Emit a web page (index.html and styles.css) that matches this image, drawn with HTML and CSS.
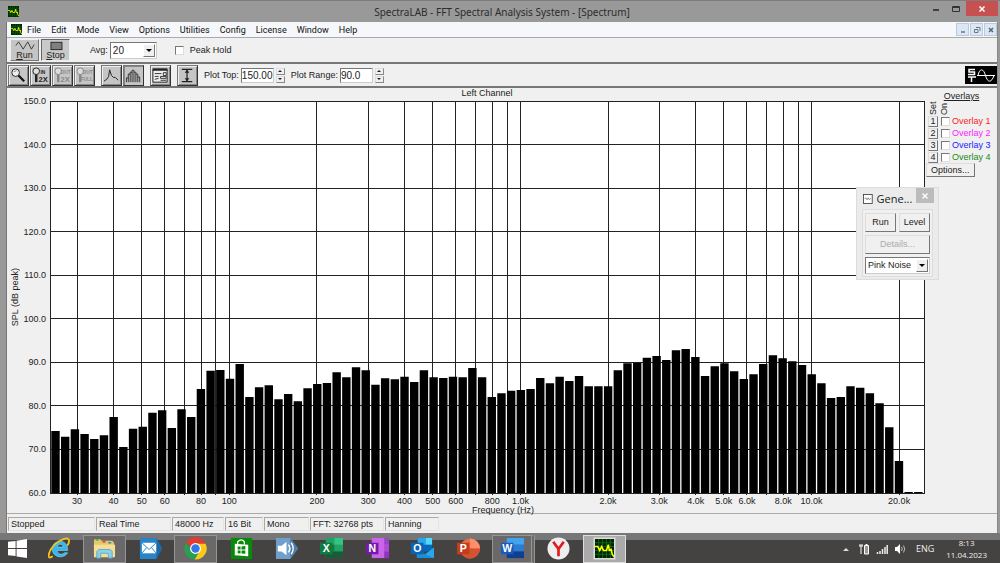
FILE: index.html
```html
<!DOCTYPE html>
<html lang="en">
<head>
<meta charset="utf-8">
<title>SpectraLAB</title>
<link rel="stylesheet" href="styles.css">
</head>
<body>
<svg class="defs" aria-hidden="true">
  <symbol id="app" viewBox="0 0 20 20"><rect width="20" height="20" fill="#020"/><path d="M4 0V20M8 0V20M12 0V20M16 0V20M0 4H20M0 8H20M0 12H20M0 16H20" stroke="#0a6a16" stroke-width="1"/><path d="M0 8H3L5 12L7 8L9 12H12L14 6L15 12L17 11L18 16L20 19" fill="none" stroke="#ff0" stroke-width="1.600"/></symbol>
  <symbol id="lens" viewBox="0 0 20 20"><circle cx="7" cy="7" r="4" fill="#eee" stroke="#222"/><path d="M10 10L16 16" stroke="#111" stroke-width="2.4"/><path d="M5 6L8 5" stroke="#888"/></symbol>
  <symbol id="knob" viewBox="0 0 20 20"><circle cx="5.500" cy="5.500" r="3.500" fill="#ddd" stroke="currentColor"/><path d="M5.500 9V17" stroke="currentColor" stroke-width="2.600"/></symbol>
</svg>
<div class="window">
  <header class="titlebar">
    <svg class="app-icon"><use href="#app"/></svg>
    <h1>SpectraLAB - FFT Spectral Analysis System - [Spectrum]</h1>
    <div class="captions">
      <button aria-label="Minimize"><svg viewBox="0 0 10 8"><path d="M2 5H8" stroke="#222" stroke-width="1.500"/></svg></button>
      <button aria-label="Maximize"><svg viewBox="0 0 10 8"><path d="M1.500 1.500H8.500V6.500H1.500Z M1.500 2.500H8.500" stroke="#333" fill="none"/></svg></button>
      <button class="close" aria-label="Close"><svg viewBox="0 0 10 8"><path d="M2.500 1.500L7.500 6.500M7.500 1.500L2.500 6.500" stroke="#fff" stroke-width="1.500"/></svg></button>
    </div>
  </header>
  <main class="client">
    <nav class="menubar">
      <svg class="app-icon"><use href="#app"/></svg>
      <button>File</button><button>Edit</button><button>Mode</button><button>View</button><button>Options</button><button>Utilities</button><button>Config</button><button>License</button><button>Window</button><button>Help</button>
      <div class="mdi">
        <button aria-label="Minimize document"><svg viewBox="0 0 10 10"><path d="M3 7H7" stroke="#678" stroke-width="1.500"/></svg></button>
        <button aria-label="Restore document"><svg viewBox="0 0 10 10"><path d="M4 2.500H8V6M2.500 4.500H6V7.500H2.500Z" stroke="#678" fill="none"/></svg></button>
        <button aria-label="Close document"><svg viewBox="0 0 10 10"><path d="M3 3L7 7M7 3L3 7" stroke="#567" stroke-width="1.500"/></svg></button>
      </div>
    </nav>
    <section class="transport">
      <button class="big"><svg viewBox="0 0 26 12"><path d="M3 6L6 2L11 10L16 2L20 10L23 5" fill="none" stroke="#333"/></svg><span><u>R</u>un</span></button>
      <button class="big pressed"><svg viewBox="0 0 26 12"><rect x="7.500" y="2.500" width="12" height="8" fill="#808080" stroke="#222"/></svg><span><u>S</u>top</span></button>
      <label class="avg" for="avg">Avg:</label>
      <span class="combo avg-combo"><select id="avg"><option>20</option></select><i></i></span>
      <label class="check"><input type="checkbox"> Peak Hold</label>
    </section>
    <section class="tools">
      <div class="group">
        <button class="tool" aria-label="Zoom"><svg viewBox="0 0 20 20"><use href="#lens"/></svg></button>
        <button class="tool" aria-label="Zoom in 2X"><svg viewBox="0 0 20 20"><use href="#knob"/><text x="10" y="8">IN</text><text x="8" y="17" class="tall">2X</text></svg></button>
        <button class="tool off" aria-label="Zoom out 2X" disabled><svg viewBox="0 0 20 20"><use href="#knob"/><text x="8" y="8">OUT</text><text x="8" y="17" class="tall">2X</text></svg></button>
        <button class="tool off" aria-label="Zoom out full" disabled><svg viewBox="0 0 20 20"><use href="#knob"/><text x="8" y="8">OUT</text><text x="6" y="16">FULL</text></svg></button>
      </div>
      <div class="group">
        <button class="tool" aria-label="Line plot"><svg viewBox="0 0 20 20"><path d="M2 16L5 14L7 11L8 4L10 10L12 12L14 12L17 15" fill="none" stroke="#222"/></svg></button>
        <button class="tool pressed" aria-label="Bar plot"><svg viewBox="0 0 20 20"><path d="M2.500 17V12.500H4.500V17M4.500 13V8.500H6.500V17M6.500 9V6.500H8.500V17M8.500 7V4.500H10.500V17M10.500 6.500H12.500V17M12.500 8.500H14.500V17M14.500 11.500H16.500V17" fill="none" stroke="#333"/></svg></button>
      </div>
      <div class="group">
        <button class="tool" aria-label="Settings"><svg viewBox="0 0 20 20"><path d="M2 3H17V17H2Z" fill="#eee" stroke="#222"/><path d="M2 4H17" stroke="#222" stroke-width="2"/><path d="M4 8H11M13 7H16V10H13ZM4 11H8M4 14L8 13M10 11H16V13H10ZM10 15H16" fill="none" stroke="#333"/></svg></button>
      </div>
      <div class="group">
        <button class="tool" aria-label="Vertical range"><svg viewBox="0 0 20 20"><path d="M4 3.500H15M4 16.500H15M9.500 4V16" stroke="#222" stroke-width="1.300"/><path d="M7 7L9.500 4L12 7ZM7 13L9.500 16L12 13Z" fill="#222"/></svg></button>
      </div>
      <div class="field"><label for="top">Plot Top:</label><input id="top" type="text" value="150.00"><span class="spin"><button aria-label="Raise top"></button><button aria-label="Lower top"></button></span></div>
      <div class="field"><label for="range">Plot Range:</label><input id="range" type="text" value="90.0"><span class="spin"><button aria-label="Raise range"></button><button aria-label="Lower range"></button></span></div>
      <svg class="brand" viewBox="0 0 32 18"><rect width="32" height="18"/><path d="M10 3.500H4V6H9.500V8.500H3M3 11H11M6.500 11V16" fill="none" stroke="#fff" stroke-width="1.500"/><path d="M12 9.500H30M13 9.500C14.500 2 18.500 2 20.500 9.500S26.500 17 29 9.500" fill="none" stroke="#fff"/></svg>
    </section>
    <section class="chart">
      <h2>Left Channel</h2>
      <div class="y-name">SPL (dB peak)</div>
      <div class="y-ticks"><span>150.0</span><span>140.0</span><span>130.0</span><span>120.0</span><span>110.0</span><span>100.0</span><span>90.0</span><span>80.0</span><span>70.0</span><span>60.0</span></div>
      <div class="plot"><svg id="plot" viewBox="0 0 874 392" preserveAspectRatio="none" role="img" aria-label="Spectrum of the left channel"></svg></div>
      <div class="x-axis"><div id="xticks" class="x-ticks"></div><div class="x-name">Frequency (Hz)</div></div>
      <aside class="overlays">
        <h3>Overlays</h3>
        <div class="heads"><span>Set</span><span>On</span></div>
        <div class="overlay red"><button>1</button><label><input type="checkbox">Overlay 1</label></div>
        <div class="overlay pink"><button>2</button><label><input type="checkbox">Overlay 2</label></div>
        <div class="overlay blue"><button>3</button><label><input type="checkbox">Overlay 3</label></div>
        <div class="overlay green"><button>4</button><label><input type="checkbox">Overlay 4</label></div>
        <button class="push">Options...</button>
      </aside>
    </section>
    <footer class="status"><span class="s87">Stopped</span><span class="s75">Real Time</span><span class="s52">48000 Hz</span><span class="s38">16 Bit</span><span class="s45">Mono</span><span class="s74">FFT: 32768 pts</span><span class="s54">Hanning</span></footer>
  </main>
  <section class="generator" aria-label="Generator">
    <div class="gen-title"><svg viewBox="0 0 12 12"><rect x=".5" y=".5" width="11" height="11" fill="#fff" stroke="#333"/><path d="M2 6L3.500 4.500L5 7L6.500 4.500L8 7L10 5" fill="none" stroke="#555" stroke-width=".8"/></svg><span>Gene...</span><button aria-label="Close generator"><svg viewBox="0 0 8 8"><path d="M1.500 1.500L6.500 6.500M6.500 1.500L1.500 6.500" stroke="#fff" stroke-width="1.400"/></svg></button></div>
    <div class="gen-body">
      <button class="push">Run</button><button class="push">Level</button>
      <button class="push wide" disabled>Details...</button>
      <span class="combo wide"><select aria-label="Signal"><option>Pink Noise</option></select><i></i></span>
    </div>
  </section>
</div>
<div class="taskbar">
  <button class="start" aria-label="Start"><svg viewBox="0 0 20 20"><path d="M0 3L8 2V9.500H0ZM9 1.800L20 0V9.500H9ZM0 10.500H8V18L0 17ZM9 10.500H20V20L9 18.300Z" fill="#fff"/></svg></button>
  <div class="tasks">
    <button aria-label="Internet Explorer"><svg viewBox="0 0 24 24"><path d="M20.500 14H9.500C9.500 18.500 15.500 19 17 16.500H20.500C17 23 5 22 4.500 13C4 2 21 1 20.500 14ZM9.500 10.500H16C15 6.500 10.500 6.500 9.500 10.500Z" fill="#35b7ee" stroke="#8adfff" stroke-width=".6"/><path d="M5 20C-2 25 0 15 7 8C13 2 22-1 22 4C22 6 21 8 20 9" fill="none" stroke="#f2c11b" stroke-width="2"/></svg></button>
    <button class="open" aria-label="Explorer"><svg viewBox="0 0 24 24"><path d="M1 4Q1 2 3 2H7L9 4H20L22 6V21H1Z" fill="#e4c86a"/><path d="M1 8H23V21H1Z" fill="#f6df93"/><path d="M3 3H6" stroke="#3a4" stroke-width="1.500"/><path d="M10 5H13" stroke="#d33" stroke-width="1.500"/><path d="M16 6H19" stroke="#28c" stroke-width="1.500"/><path d="M4 22V15L6 13H18L20 15V22H16V17H8V22Z" fill="#8dd0ea" stroke="#5ba9d0"/></svg></button>
    <button aria-label="Mail"><svg viewBox="0 0 24 24"><path d="M1 1H18L24 12L18 23H1Z" fill="#2685c9"/><path d="M18 1L24 12L18 23Z" fill="#176bad"/><path d="M3 6H18V17H3Z" fill="#fff"/><path d="M3 6L10.500 13L18 6M3 17L8 11M18 17L13 11" fill="none" stroke="#2685c9"/></svg></button>
    <button class="open" aria-label="Chrome"><svg viewBox="0 0 24 24"><path d="M12 12L2 6A11.500 11.500 0 0 1 22.500 7H12Z" fill="#e33b2e"/><path d="M12 12V7H22.500A11.500 11.500 0 0 1 11 23.500L16.500 14Z" fill="#fbc918"/><path d="M2 6A11.500 11.500 0 0 0 11 23.500L16.300 14.500L12 17L7.500 14.500Z" fill="#25a24c"/><circle cx="12" cy="12" r="5.700" fill="#fff"/><circle cx="12" cy="12" r="4.400" fill="#3578e5"/></svg></button>
    <button aria-label="Store"><svg viewBox="0 0 24 24"><path d="M1 1H23V23H1Z" fill="#078a08"/><path d="M5 7L19 8V20L5 19Z" fill="#fff"/><path d="M8 8V5Q12 1 15 5V8" fill="none" stroke="#fff" stroke-width="1.300"/><path d="M8 10L11 9.800V13H8ZM12 9.800L16 9.500V13H12ZM8 14H11V17.200L8 17ZM12 14H16V17.500L12 17.200Z" fill="#078a08"/></svg></button>
    <button aria-label="Sound"><svg viewBox="0 0 24 24"><path d="M1 1H16L24 12L16 23H1Z" fill="#6f9fca"/><path d="M16 1L24 12L16 23Z" fill="#4c7ead"/><path d="M3 9H7L12 5V19L7 15H3Z" fill="#fff"/><path d="M14 8Q17 12 14 16M17 6Q21 12 17 18" fill="none" stroke="#fff" stroke-width="1.500"/></svg></button>
    <button aria-label="Excel"><svg viewBox="0 0 24 24"><path d="M6 1H24V22H6Z" fill="#21a366"/><path d="M15 1H24V8H15Z" fill="#33c481"/><path d="M6 15H24V22H6Z" fill="#185c37"/><path d="M6 8H15V15H6Z" fill="#107c41"/><path d="M0 6H13V18H0Z" fill="#107c41"/><text x="6.500" y="16">X</text></svg></button>
    <button aria-label="OneNote"><svg viewBox="0 0 24 24"><path d="M6 1H24V22H6Z" fill="#ca64ea"/><path d="M19 1H24V8H19Z" fill="#9b45c9"/><path d="M19 8H24V15H19Z" fill="#ae4bd5"/><path d="M19 15H24V22H19Z" fill="#9332bf"/><path d="M0 6H13V18H0Z" fill="#7719aa"/><text x="6.500" y="16">N</text></svg></button>
    <button aria-label="Outlook"><svg viewBox="0 0 24 24"><path d="M7 1H22V15H7Z" fill="#0a68bb"/><path d="M15 1H22V8H15Z" fill="#50d9ff"/><path d="M7 1H15V8H7Z" fill="#28a8ea"/><path d="M6 12L15 18L24 11V22H6Z" fill="#1490df"/><path d="M15 18L24 11V22Z" fill="#28a8ea"/><path d="M0 6H13V18H0Z" fill="#0a64b5"/><text x="6.500" y="16">O</text></svg></button>
    <button aria-label="PowerPoint"><svg viewBox="0 0 24 24"><circle cx="13.500" cy="12" r="10.500" fill="#ed6c47"/><path d="M13.500 1.500A10.500 10.500 0 0 1 24 12H13.500Z" fill="#ff8f6b"/><path d="M3 12H24A10.500 10.500 0 0 1 3 12Z" fill="#d35230"/><path d="M0 6H13V18H0Z" fill="#c43e1c"/><text x="6.500" y="16">P</text></svg></button>
    <button class="open stacked" aria-label="Word"><svg viewBox="0 0 24 24"><path d="M6 1H24V8H6Z" fill="#41a5ee"/><path d="M6 8H24V15H6Z" fill="#2b7cd3"/><path d="M6 15H24V22H6Z" fill="#103f91"/><path d="M0 6H13V18H0Z" fill="#185abd"/><text x="6.500" y="16">W</text></svg></button>
    <button aria-label="Yandex"><svg viewBox="0 0 24 24"><circle cx="12" cy="12" r="11.500" fill="#eee"/><path d="M6.500 5L12 12.500L17.500 5M12 12V20" fill="none" stroke="#e21a1a" stroke-width="2.800"/></svg></button>
    <button class="open active" aria-label="SpectraLAB"><svg viewBox="0 0 24 24"><rect x=".5" y=".5" width="23" height="23" fill="#ddd"/><use href="#app" x="2" y="2" width="20" height="20"/></svg></button>
  </div>
  <div class="tray">
    <svg viewBox="0 0 12 12"><path d="M3 8L6 5L9 8Z" fill="#ddd"/></svg>
    <svg viewBox="0 0 12 12"><path d="M1 3H5M2 1V3M4 1V3M3 3V11" stroke="#fff" fill="none"/><path d="M6.500 2.500H10.500V11H6.500Z" fill="#999" stroke="#fff"/><path d="M7.500 1.500H9.500" stroke="#fff"/></svg>
    <svg viewBox="0 0 12 12"><path d="M1.500 11V9M4 11V8M6.500 11V6M9 11V4M11.200 11V2" stroke="#eee" stroke-width="1.500"/></svg>
    <svg viewBox="0 0 12 12"><path d="M1 4H3L6 1V11L3 8H1Z" fill="#fff"/><path d="M7.500 4Q9 6 7.500 8M9.500 2.500Q12 6 9.500 9.500" fill="none" stroke="#bbb"/></svg>
    <span class="lang">ENG</span>
    <time>8:13<br>11.04.2023</time>
  </div>
</div>
<script src="chart.js"></script>
</body>
</html>
```
FILE: styles.css
```css
* { box-sizing: border-box; }
body { margin: 0; min-height: 100vh; display: flex; flex-direction: column; background: #454242; color: #222; font: 9px/11px "Liberation Sans", Arial, sans-serif; }
button, input, select { font: inherit; color: inherit; margin: 0; padding: 0; border: 0; border-radius: 0; background: none; }
h1, h2, h3 { margin: 0; font-weight: normal; }
svg { display: block; }
.defs { position: absolute; width: 0; height: 0; }

.window { position: relative; flex: 1; display: flex; flex-direction: column; background: #999; border-top: 1px solid #7c7c7c; padding: 0 2px 0 6px; }
.titlebar { display: grid; grid-template-columns: 120px 1fr 120px; height: 21px; align-items: center; }
.titlebar h1 { text-align: center; font: 10px/14px "Noto Sans", sans-serif; color: #2c2c2c; }
.app-icon { width: 11px; height: 11px; margin-left: 2px; }
.captions { display: flex; justify-content: flex-end; align-self: start; }
.captions button { width: 20px; height: 15px; display: grid; place-items: center; }
.captions svg { width: 10px; height: 8px; }
.captions .close { width: 32px; background: #c75050; }

.client { flex: 1; display: flex; flex-direction: column; background: #f0f0f0; border-left: 1px solid #777; border-right: 1px solid #888; }
.menubar { display: flex; align-items: center; gap: 10px; height: 16px; padding-left: 2px; background: #f5f7fa; border-bottom: 1px solid #aaa; font: 9px/12px Roboto, sans-serif; color: #111; }
.menubar .app-icon { margin-right: -5px; }
.mdi { display: flex; gap: 1px; margin-left: auto; }
.mdi button { width: 13px; height: 13px; display: grid; place-items: center; background: #dbe7f4; border: 1px solid #bccadb; }
.mdi svg { width: 10px; height: 10px; }

.transport { display: flex; align-items: center; height: 26px; padding: 1px 3px; border-bottom: 2px solid #777; }
.big { width: 29px; height: 22px; margin-right: 2px; background: #c5c5c5; border: 1px solid; border-color: #eee #777 #777 #eee; display: flex; flex-direction: column; align-items: center; line-height: 9px; }
.big svg { width: 26px; height: 11px; flex: none; }
.big span { line-height: 9px; }
.pressed, .big.pressed { background: #c9c9c9; border-color: #666 #eee #eee #666; }
.avg { margin: 0 2px 0 18px; }
.combo { position: relative; display: flex; background: #fff; border: 1px solid; border-color: #777 #ccc #ccc #777; }
.combo select { appearance: none; width: 100%; padding: 0 14px 0 2px; outline: 0; }
.combo i { position: absolute; right: 1px; top: 1px; bottom: 1px; width: 12px; background: #f0f0f0; border: 1px solid; border-color: #fff #777 #777 #fff; display: grid; place-items: center; pointer-events: none; }
.combo i::after { content: ""; border: 3px solid transparent; border-top-color: #000; border-bottom: 0; }
.avg-combo { width: 47px; height: 17px; font-size: 10px; }
.check { display: flex; align-items: center; gap: 6px; margin-left: 18px; }
input[type=checkbox] { appearance: none; width: 9px; height: 9px; background: #fff; border: 1px solid; border-color: #777 #ddd #ddd #777; }

.tools { display: flex; align-items: center; height: 24px; padding: 0 0 0 1px; gap: 6px; border-bottom: 2px solid #777; }
.group { display: flex; gap: 1px; }
.tool { width: 21px; height: 21px; background: #c5c5c5; border: 1px solid; border-color: #777 #333 #333 #777; box-shadow: inset 1px 1px #eee, inset -1px -1px #888; display: grid; place-items: center; }
.tool svg { width: 19px; height: 19px; color: #222; }
.tool.pressed { box-shadow: inset 1px 1px #888; }
.tool text { font-size: 5px; font-weight: bold; fill: currentColor; }
.tool .tall { font-size: 8px; }
.tool.off svg { color: #888; }
.field { display: flex; align-items: center; gap: 2px; }
.field input { width: 33px; height: 15px; background: #fff; border: 1px solid; border-color: #777 #ccc #ccc #777; font-size: 10px; }
.spin { display: grid; gap: 1px; }
.spin button { width: 9px; height: 7px; border: 1px solid; border-color: #ddd #888 #888 #ddd; display: grid; place-items: center; }
.spin button::after { content: ""; border: 2px solid transparent; border-bottom-color: #222; border-top: 0; }
.spin button + button::after { border-top: 2px solid #222; border-bottom: 0; }
.brand { width: 32px; height: 18px; margin-left: auto; }

.chart { flex: 1; display: grid; grid-template: 13px 1fr 20px / 16px 27px 1fr 73px; border-bottom: 1px solid #aaa; }
.chart h2 { grid-area: 1 / 3; text-align: center; font-size: 9px; }
.y-name { grid-area: 2 / 1; writing-mode: vertical-rl; transform: rotate(180deg); justify-self: center; align-self: center; line-height: 11px; }
.y-ticks { grid-area: 2 / 2; display: flex; flex-direction: column; justify-content: space-between; margin: -5px 4px -6px 0; text-align: right; }
.plot { grid-area: 2 / 3; background: #fff; position: relative; }
.plot svg { position: absolute; inset: 0; width: 100%; height: 100%; overflow: visible; }
.grid { stroke: #222; fill: none; vector-effect: non-scaling-stroke; shape-rendering: crispEdges; }
.bars { fill: #000; }
.x-axis { grid-area: 3 / 3; }
.x-ticks { position: relative; height: 10px; margin-top: 3px; }
.x-ticks span { position: absolute; transform: translateX(-50%); }
.x-name { text-align: center; padding-left: 32px; line-height: 8px; }
.overlays { grid-area: 1 / 4 / 4 / 5; padding: 3px 0 0 2px; }
.overlays h3 { font-size: 9px; text-decoration: underline; text-align: center; }
.heads { display: flex; gap: 1px; height: 13px; padding-left: 2px; }
.heads span { writing-mode: vertical-rl; transform: rotate(180deg); line-height: 10px; }
.overlay { display: flex; align-items: center; gap: 3px; height: 12px; padding-left: 2px; }
.overlay button { width: 10px; height: 11px; border: 1px solid; border-color: #ddd #777 #777 #ddd; color: #222; line-height: 9px; }
.overlay label { display: flex; align-items: center; gap: 2px; }
.red { color: #f22; } .pink { color: #f2f; } .blue { color: #22f; } .green { color: #1a8a1a; }
.push { height: 14px; padding: 0 4px; background: #f0f0f0; border: 1px solid; border-color: #ddd #777 #777 #ddd; }

.status { display: flex; gap: 1px; height: 19px; padding: 3px 1px 2px; }
.status span { height: 14px; padding: 1px 2px; border: 1px solid; border-color: #aaa #e4e4e4 #e4e4e4 #aaa; white-space: nowrap; }
.s87 { width: 87px; } .s75 { width: 75px; } .s52 { width: 52px; } .s38 { width: 38px; } .s45 { width: 45px; } .s74 { width: 74px; } .s54 { width: 54px; }

.generator { position: absolute; right: 61px; top: 186px; width: 83px; padding: 0 5px 2px; background: #ebebeb; border: 1px solid #dcdcdc; }
.gen-title { display: flex; align-items: center; gap: 4px; height: 21px; margin: 0 -1px 0 1px; font: 11px/14px "Open Sans", sans-serif; }
.gen-title > svg { width: 12px; height: 12px; }
.gen-title button { width: 22px; height: 15px; margin-left: auto; align-self: start; background: #bcbcbc; display: grid; place-items: center; }
.gen-title button svg { width: 8px; height: 8px; }
.gen-body { display: grid; grid-template-columns: 1fr 1fr; gap: 3px; padding: 3px 2px 2px; background: #f0f0f0; border: 1px solid #ddd; }
.gen-body .push { height: 19px; padding: 0; }
.gen-body .wide { grid-column: 1 / 3; }
.gen-body .push:disabled { color: #aaa; }
.gen-body .combo { height: 17px; }

.taskbar { height: 30px; padding-top: 1px; display: flex; align-items: center; background: linear-gradient(#777 7px, #454242 7px); color: #eee; font: 9px/12px "Open Sans", sans-serif; }
.start { width: 38px; height: 28px; padding-left: 8px; }
.start svg { width: 19px; height: 19px; }
.tasks { display: flex; justify-content: space-between; flex: 0 1 588px; }
.tasks button { width: 43px; height: 28px; display: grid; place-items: center; }
.tasks svg { width: 23px; height: 23px; }
.tasks text { font: bold 11px "Liberation Sans", sans-serif; fill: #fff; text-anchor: middle; }
.tasks .open { background: #6a6868; border: 1px solid #969494; }
.tasks .stacked { border-right: 4px double #969494; }
.tasks .active { background: #aaa; border-color: #ddd; }
.tray { margin-left: auto; display: flex; align-items: center; gap: 6px; padding-right: 13px; }
.tray svg { width: 12px; height: 12px; }
.lang { margin-left: 4px; }
.tray time { margin-left: 6px; text-align: center; font-size: 8px; }
```
FILE: chart.js
```js
// Bar tops, in thirds of a plot unit below 95 dB.
const tops = [273,290,268,282,297,286,231,321,266,260,218,211,264,208,231,147,92,90,116,72,171,142,136,178,162,184,145,132,129,97,112,82,91,134,115,118,110,126,91,112,114,110,112,84,112,171,160,152,150,147,114,130,110,123,108,139,139,139,91,70,68,53,48,60,31,27,51,108,79,70,94,117,103,72,46,55,64,75,103,130,174,171,139,143,160,190,262,363,456,456];
const width = 874, height = 392, pitch = 9.695;
const xOf = hz => 179.3 + 291.1 * Math.log10(hz / 100);

let grid = `M0 0H${width}V${height}H0Z`;
for (let i = 1; i < 9; i++) grid += `M0 ${height * i / 9}H${width}`;
for (const decade of [10, 100, 1000, 10000])
  for (let n = 1; n < 10; n++) {
    const hz = decade * n;
    if (hz >= 30 && hz <= 20000) grid += `M${xOf(hz)} 0V${height + 2}`;
  }
let bars = '';
tops.forEach((t, i) => {
  bars += `M${1.3 + i * pitch} ${height}V${239 + t / 3}h8.4V${height}Z`;
});
document.getElementById('plot').innerHTML = `<path class="grid" d="${grid}"/><path class="bars" d="${bars}"/>`;

const labels = [30, 40, 50, 60, 80, 100, 200, 300, 400, 500, 600, 800, 1000, 2000, 3000, 4000, 5000, 6000, 8000, 10000, 20000];
document.getElementById('xticks').innerHTML = labels.map(hz =>
  `<span style="left:${xOf(hz) / width * 100}%">${hz < 1000 ? hz : (hz / 1000).toFixed(1) + 'k'}</span>`).join('');
```
